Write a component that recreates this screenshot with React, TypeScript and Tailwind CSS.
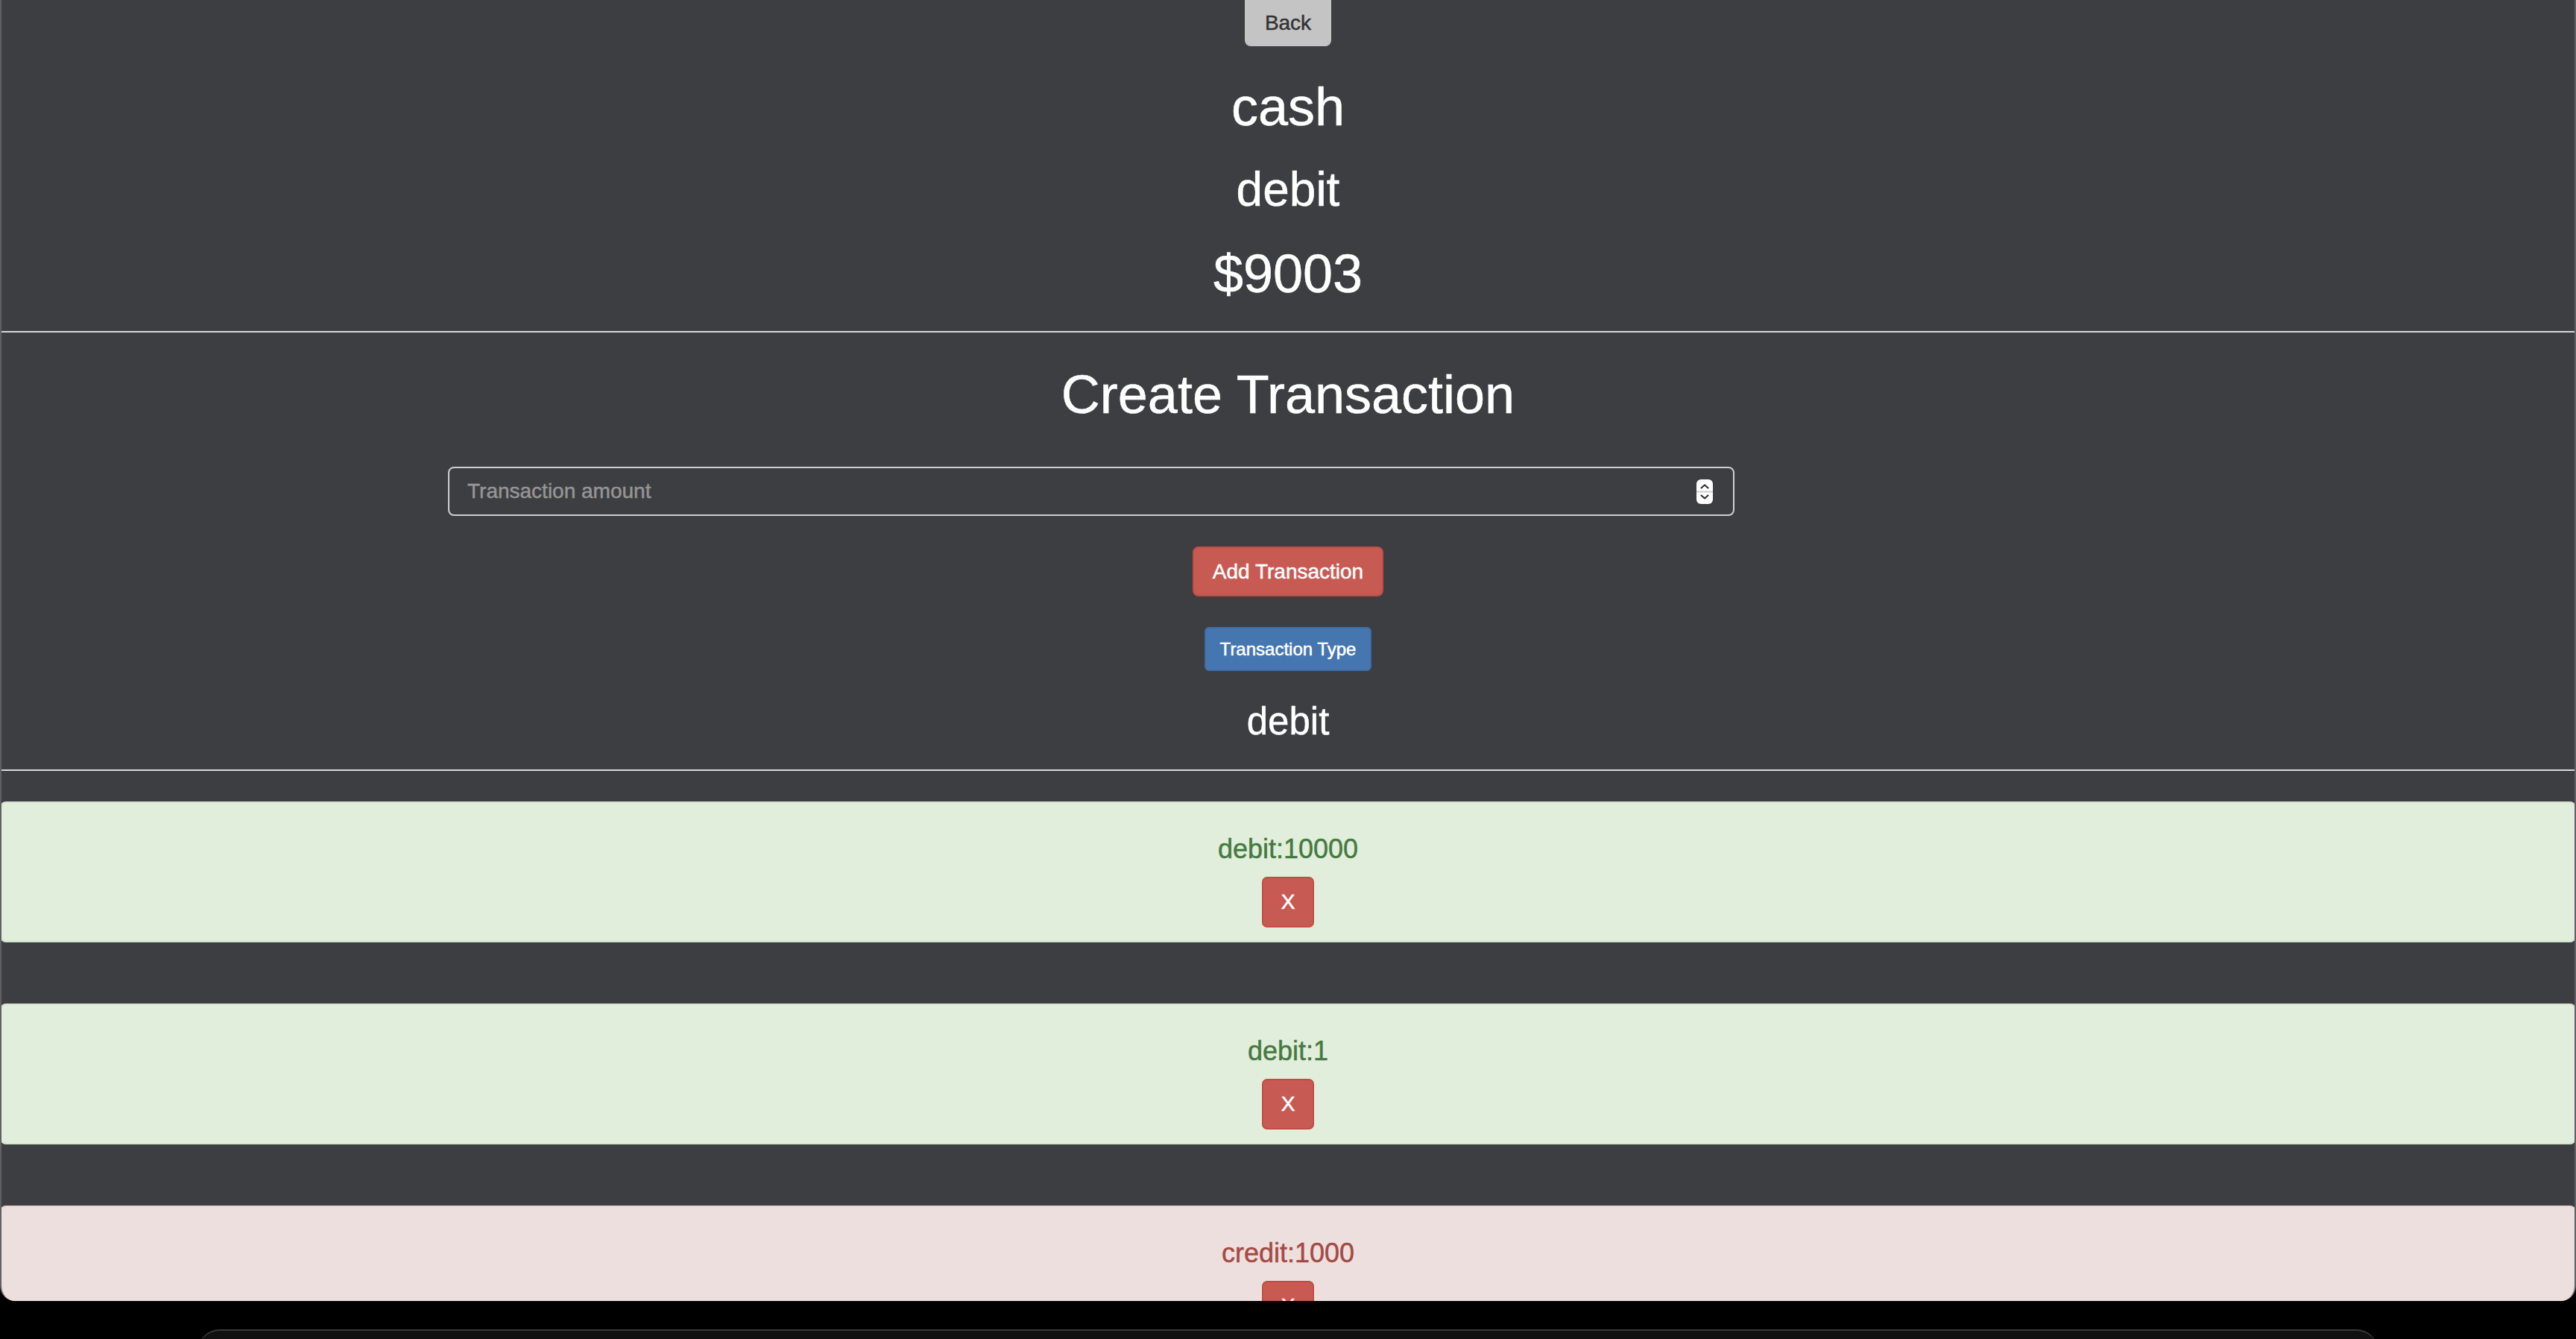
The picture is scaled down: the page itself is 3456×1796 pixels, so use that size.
import React from "react";

function Spinner() {
  return (
    <svg width="22" height="33" viewBox="0 0 22 33" className="shrink-0">
      <rect x="0" y="0" width="22" height="33" rx="6" fill="#ffffff" />
      <line x1="0" y1="16.5" x2="22" y2="16.5" stroke="#cfcfcf" strokeWidth="2" />
      <path d="M6.5 11.5 L11 7.5 L15.5 11.5" fill="none" stroke="#2a2a2a" strokeWidth="2" strokeLinecap="round" strokeLinejoin="round" />
      <path d="M6.5 21.5 L11 25.5 L15.5 21.5" fill="none" stroke="#2a2a2a" strokeWidth="2" strokeLinecap="round" strokeLinejoin="round" />
    </svg>
  );
}

type Tx = { type: "debit" | "credit"; amount: number };

const txs: Tx[] = [
  { type: "debit", amount: 10000 },
  { type: "debit", amount: 1 },
  { type: "credit", amount: 1000 },
];

function TxCard({ tx }: { tx: Tx }) {
  const isDebit = tx.type === "debit";
  return (
    <div
      className={
        isDebit
          ? "h-[189px] shrink-0 rounded-[8px] border-2 border-[#d6e3d0] bg-[#e1eedb] flex flex-col items-center"
          : "h-[189px] shrink-0 rounded-[8px] border-2 border-[#e6d6d6] bg-[#eedfdf] flex flex-col items-center"
      }
    >
      <div
        className={
          isDebit
            ? "mt-[42px] h-[40px] leading-[40px] text-[36px] text-[#467a41]"
            : "mt-[42px] h-[40px] leading-[40px] text-[36px] text-[#a44a44]"
        }
      >
        {tx.type}:{tx.amount}
      </div>
      <button className="mt-[17px] h-[68px] w-[70px] shrink-0 rounded-[7px] border-2 border-[#c24c44] bg-[#c75b53] text-[28px] text-white leading-none">
        X
      </button>
    </div>
  );
}

export default function App() {
  return (
    <div className="w-[3456px] h-[1796px] bg-black overflow-hidden font-['Liberation_Sans',Arial,sans-serif] [-webkit-text-stroke:0.5px_currentColor]">
      <div className="h-[1745px] rounded-b-[20px] overflow-hidden bg-[#3d3e41] border-x-2 border-[#606164]">
        {/* Account header */}
        <section className="h-[446px] border-b-2 border-[#d9d9d9] flex flex-col items-center">
          <button className="h-[62px] w-[116px] shrink-0 rounded-b-[8px] bg-[#c4c4c4] text-[28px] text-[#333333] leading-none">
            Back
          </button>
          <div className="mt-[42px] h-[79px] leading-[79px] text-[72px] text-white">cash</div>
          <div className="mt-[36px] h-[70px] leading-[70px] text-[64px] text-white">debit</div>
          <div className="mt-[39px] h-[79px] leading-[79px] text-[72px] text-white">$9003</div>
        </section>

        {/* Create transaction */}
        <section className="h-[588px] border-b-2 border-[#d9d9d9] flex flex-col items-center">
          <div className="mt-[44px] h-[79px] leading-[79px] text-[72px] text-white">Create Transaction</div>
          <div className="mt-[57px] self-start ml-[599px] w-[1726px] h-[66px] shrink-0 rounded-[8px] border-2 border-[#cfcfcf] flex items-center pl-[24px] pr-[27px]">
            <input
              type="text"
              placeholder="Transaction amount"
              className="flex-1 bg-transparent outline-none text-[28px] text-white placeholder:text-[#959595]"
            />
            <Spinner />
          </div>
          <button className="mt-[41px] h-[67px] w-[256px] shrink-0 rounded-[8px] border-2 border-[#c24c44] bg-[#c75b53] text-[28px] text-white leading-none">
            Add Transaction
          </button>
          <button className="mt-[41px] h-[59px] w-[224px] shrink-0 rounded-[6px] border-2 border-[#3f6ca4] bg-[#4676b0] text-[24px] text-white leading-none">
            Transaction Type
          </button>
          <div className="mt-[40px] h-[56px] leading-[56px] text-[51px] text-white">debit</div>
        </section>

        {/* Transaction list */}
        <div className="pt-[41px] -mx-[2px] flex flex-col gap-[82px]">
          {txs.map((tx, i) => (
            <TxCard key={i} tx={tx} />
          ))}
        </div>
      </div>
      <div className="mt-[38px] mx-[265px] h-[30px] rounded-t-[40px] bg-[#111111] border-t-2 border-[#3a3a3a]" />
    </div>
  );
}
